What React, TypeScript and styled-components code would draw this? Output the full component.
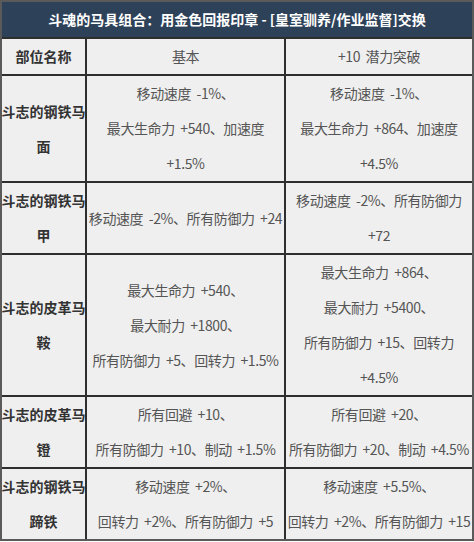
import React from "react";
import styled, { createGlobalStyle } from "styled-components";

type Row = {
  name: string[];
  base: string[];
  breakthrough: string[];
};

const rows: Row[] = [
  {
    name: ["斗志的钢铁马", "面"],
    base: ["移动速度  -1%、", "最大生命力  +540、加速度", "+1.5%"],
    breakthrough: ["移动速度  -1%、", "最大生命力  +864、加速度", "+4.5%"],
  },
  {
    name: ["斗志的钢铁马", "甲"],
    base: ["移动速度  -2%、所有防御力  +24"],
    breakthrough: ["移动速度  -2%、所有防御力", "+72"],
  },
  {
    name: ["斗志的皮革马", "鞍"],
    base: ["最大生命力  +540、", "最大耐力  +1800、", "所有防御力  +5、回转力  +1.5%"],
    breakthrough: [
      "最大生命力  +864、",
      "最大耐力  +5400、",
      "所有防御力  +15、回转力",
      "+4.5%",
    ],
  },
  {
    name: ["斗志的皮革马", "镫"],
    base: ["所有回避  +10、", "所有防御力  +10、制动  +1.5%"],
    breakthrough: ["所有回避  +20、", "所有防御力  +20、制动  +4.5%"],
  },
  {
    name: ["斗志的钢铁马", "蹄铁"],
    base: ["移动速度  +2%、", "回转力  +2%、所有防御力  +5"],
    breakthrough: ["移动速度  +5.5%、", "回转力  +2%、所有防御力  +15"],
  },
];

const GlobalStyle = createGlobalStyle`
  body {
    margin: 0;
    background: #ffffff;
    font-family: "Noto Sans CJK SC", "Noto Sans", "Liberation Sans", sans-serif;
  }
`;

const Frame = styled.div`
  width: 474px;
  box-sizing: border-box;
  border: 2px solid #5a5a5a;
  background: #2e2e2e;
`;

const Title = styled.div`
  height: 35px;
  line-height: 35px;
  background: #2d4159;
  color: #ffffff;
  font-size: 14px;
  font-weight: 700;
  text-align: center;
  white-space: pre;
  border-bottom: 2px solid #2e2e2e;
`;

const Grid = styled.div`
  display: grid;
  grid-template-columns: 83px 197px 1fr;
  gap: 2px;
`;

const Cell = styled.div<{ $bold?: boolean }>`
  background: #efefef;
  display: flex;
  flex-direction: column;
  justify-content: center;
  align-items: center;
  min-height: 35px;
  font-size: 14px;
  line-height: 35px;
  font-weight: ${(p) => (p.$bold ? 700 : 400)};
  color: ${(p) => (p.$bold ? "#333333" : "#555555")};
  letter-spacing: ${(p) => (p.$bold ? "0" : "-0.4px")};
  text-align: center;
  overflow: visible;
`;

const Line = styled.span`
  display: block;
  white-space: pre;
`;

const Lines: React.FC<{ items: string[] }> = ({ items }) => (
  <>
    {items.map((t, i) => (
      <Line key={i}>{t}</Line>
    ))}
  </>
);

export default function App() {
  return (
    <>
      <GlobalStyle />
      <Frame>
        <Title>斗魂的马具组合：用金色回报印章 - [皇室驯养/作业监督]交换</Title>
        <Grid>
          <Cell $bold>部位名称</Cell>
          <Cell>基本</Cell>
          <Cell>
            <Line>+10  潜力突破</Line>
          </Cell>
          {rows.map((r, i) => (
            <React.Fragment key={i}>
              <Cell $bold>
                <Lines items={r.name} />
              </Cell>
              <Cell>
                <Lines items={r.base} />
              </Cell>
              <Cell>
                <Lines items={r.breakthrough} />
              </Cell>
            </React.Fragment>
          ))}
        </Grid>
      </Frame>
    </>
  );
}
